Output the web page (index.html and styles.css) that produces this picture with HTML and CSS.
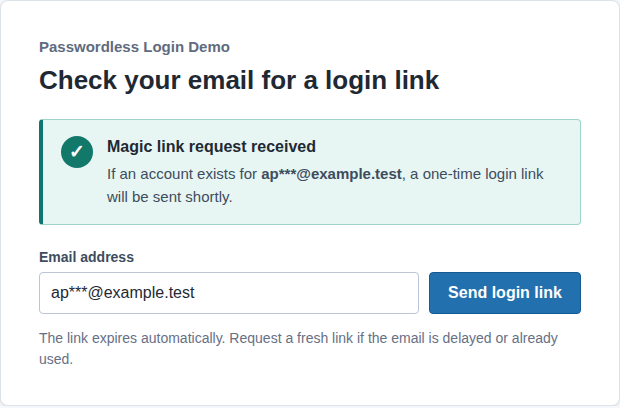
FILE: index.html
```html
<!DOCTYPE html>
<html lang="en">
<head>
<meta charset="utf-8">
<title>Passwordless Login Demo</title>
<link rel="stylesheet" href="styles.css">
</head>
<body>
<main class="card">
  <p class="eyebrow">Passwordless Login Demo</p>
  <h1 class="title">Check your email for a login link</h1>
  <section class="alert">
    <span class="alert-icon">✓</span>
    <div class="alert-body">
      <h2 class="alert-title">Magic link request received</h2>
      <p class="alert-text">If an account exists for <strong>ap***@example.test</strong>, a one-time login link will be sent shortly.</p>
    </div>
  </section>
  <form class="form">
    <label class="label" for="email">Email address</label>
    <div class="row">
      <input class="input" id="email" type="email" value="ap***@example.test">
      <button class="button" type="button">Send login link</button>
    </div>
  </form>
  <p class="hint">The link expires automatically. Request a fresh link if the email is delayed or already used.</p>
</main>
</body>
</html>
```
FILE: styles.css
```css
* { box-sizing: border-box; }
html { background: #f5f7fa; }
html, body { margin: 0; padding: 0; }
body {
  font-family: "Liberation Sans", Arial, sans-serif;
  color: #1f2933;
}
.card {
  width: 620px;
  height: 406px;
  background: #fff;
  border: 1px solid #dbe3ea;
  border-radius: 8px;
  box-shadow: 0 1px 3px rgba(31, 41, 51, 0.1);
  padding: 38px 38px 0;
}
.eyebrow {
  margin: 0 0 10px;
  font-size: 15px;
  line-height: 16px;
  font-weight: 700;
  color: #5f6b7e;
}
.title {
  margin: 0 0 24px;
  font-size: 26px;
  line-height: 30px;
  font-weight: 700;
  color: #1f2933;
}
.alert {
  display: flex;
  gap: 14px;
  height: 106px;
  padding: 16px 18px;
  background: #e7f6f3;
  border: 1px solid #9dd5ca;
  border-left: 4px solid #0f766e;
  border-radius: 4px;
}
.alert-icon {
  flex: none;
  width: 32px;
  height: 32px;
  border-radius: 50%;
  background: #12786a;
  color: #fff;
  font-size: 19px;
  font-weight: 700;
  line-height: 32px;
  text-align: center;
}
.alert-title {
  margin: 0 0 4px;
  font-size: 16px;
  line-height: 22px;
  font-weight: 700;
  color: #1f2933;
}
.alert-text {
  margin: 0;
  font-size: 15px;
  line-height: 23.25px;
  color: #3e4c5e;
}
.alert-text strong { font-weight: 700; }
.form { margin-top: 24px; }
.label {
  display: block;
  margin-bottom: 6px;
  font-size: 14px;
  line-height: 17px;
  font-weight: 700;
  color: #3e4c5e;
}
.row { display: flex; gap: 10px; }
.input {
  flex: 1;
  min-width: 0;
  height: 42px;
  padding: 0 11px;
  border: 1px solid #bcc5d3;
  border-radius: 4px;
  background: #fff;
  font-family: inherit;
  font-size: 16px;
  color: #1f2933;
}
.button {
  flex: none;
  width: 152px;
  height: 42px;
  padding: 0;
  border: 1px solid #175a92;
  border-radius: 4px;
  background: #2270ae;
  color: #fff;
  font-family: inherit;
  font-size: 16px;
  font-weight: 700;
}
.hint {
  margin: 14px 0 0;
  font-size: 14px;
  line-height: 21px;
  color: #667085;
}
```
